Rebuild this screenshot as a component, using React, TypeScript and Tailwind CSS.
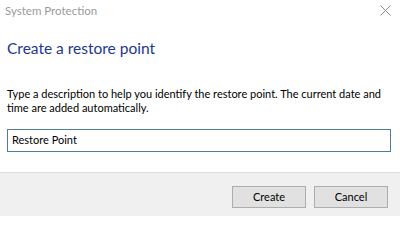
export default function App() {
  return (
    <div
      className="flex h-[216px] w-[400px] flex-col overflow-hidden bg-white text-black"
      style={{ fontFamily: '"Segoe UI", Lato, "Noto Sans", sans-serif' }}
    >
      {/* title bar */}
      <div className="flex h-[22px] shrink-0 items-center justify-between pl-[5px] pr-[9px]">
        <span className="text-[11.5px] text-[#9a9a9a]">System Protection</span>
        <svg width="11" height="11" viewBox="0 0 11 11" className="mt-[-2px]">
          <path d="M0.5 0.5 L10.5 10.5 M10.5 0.5 L0.5 10.5" stroke="#8a8a8a" strokeWidth="1" fill="none" />
        </svg>
      </div>

      {/* body */}
      <div className="flex flex-1 flex-col pl-[7px] pr-[9px]">
        <h1 className="mt-[16px] text-[15.5px] leading-[20px] text-[#1d378f]">Create a restore point</h1>
        <p className="mt-[29px] text-[11px] leading-[14px]">
          Type a description to help you identify the restore point. The current date and time are added automatically.
        </p>
        <div className="mt-[14px] flex h-[23px] items-center border border-[#4f7f96] px-[4px] text-[11px]">
          Restore Point
        </div>
      </div>

      {/* footer */}
      <div className="flex h-[44px] shrink-0 items-start justify-end gap-[8px] border-t border-[#dcdcdc] bg-[#f0f0f0] pr-[12px] pt-[13px]">
        <button className="h-[22px] w-[74px] border border-[#adadad] bg-[#e1e1e1] text-[11px]">Create</button>
        <button className="h-[22px] w-[74px] border border-[#adadad] bg-[#e1e1e1] text-[11px]">Cancel</button>
      </div>
    </div>
  );
}
